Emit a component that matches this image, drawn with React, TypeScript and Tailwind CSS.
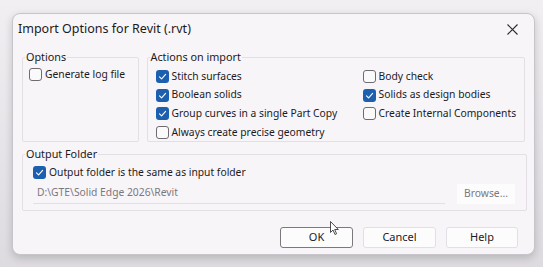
import React from 'react';

type CheckProps = { label: string; checked?: boolean };

const Check: React.FC<CheckProps> = ({ label, checked }) => (
  <label className="flex items-center gap-[3px] h-[18.7px] whitespace-nowrap">
    {checked ? (
      <span className="w-[13px] h-[13px] rounded-[3px] bg-[#1c5fae] flex items-center justify-center shrink-0">
        <svg width="9" height="9" viewBox="0 0 9 9" fill="none">
          <path d="M1.5 4.8 L3.6 6.8 L7.6 2.3" stroke="#ffffff" strokeWidth="1.1" strokeLinecap="round" strokeLinejoin="round" />
        </svg>
      </span>
    ) : (
      <span className="w-[13px] h-[13px] rounded-[3px] border border-[#6f6b70] bg-[#fbfafb] shrink-0" />
    )}
    <span>{label}</span>
  </label>
);

const Group: React.FC<{ title: string; className?: string; children: React.ReactNode }> = ({
  title,
  className,
  children,
}) => (
  <fieldset className={`border border-[#e3dfe5] rounded-[2px] ${className ?? ''}`}>
    <legend className="ml-[2px] px-[1px] leading-[14px] text-[10.8px]">{title}</legend>
    {children}
  </fieldset>
);

export default function App() {
  return (
    <div
      className="w-[543px] h-[267px] bg-gradient-to-b from-[#f1eff2] to-[#dddbdf] pt-[13px] pl-[12px] overflow-hidden relative text-[#1b1a1c]"
      style={{ fontFamily: '"Noto Sans", "Open Sans", sans-serif' }}
    >
      <div className="w-[523px] h-[242px] rounded-[8px] border border-[#c8c5ca] bg-[#f8f5f9] shadow-[0_3px_8px_rgba(0,0,0,0.18)] flex flex-col">
        {/* title bar */}
        <div className="h-[30px] flex items-center justify-between pl-[5px] pr-[16px] pt-[1px]">
          <span className="text-[12.5px]">Import Options for Revit (.rvt)</span>
          <svg width="11" height="11" viewBox="0 0 11 11">
            <path d="M0.5 0.5 L10.5 10.5 M10.5 0.5 L0.5 10.5" stroke="#2a292b" strokeWidth="1.1" />
          </svg>
        </div>

        <div className="text-[10.3px] flex flex-col px-[9px] pt-[6px]">
          <div className="flex gap-[8px]">
            <Group title="Options" className="w-[117px] h-[92px]">
              <div className="pt-[1px] pl-[6px]">
                <Check label="Generate log file" />
              </div>
            </Group>
            <Group title="Actions on import" className="w-[380px] h-[92px]">
              <div className="flex pt-[3px] pl-[8px]">
                <div className="w-[207px] flex flex-col">
                  <Check label="Stitch surfaces" checked />
                  <Check label="Boolean solids" checked />
                  <Check label="Group curves in a single Part Copy" checked />
                  <Check label="Always create precise geometry" />
                </div>
                <div className="flex flex-col">
                  <Check label="Body check" />
                  <Check label="Solids as design bodies" checked />
                  <Check label="Create Internal Components" />
                </div>
              </div>
            </Group>
          </div>

          <Group title="Output Folder" className="mt-[5px] w-[505px] h-[64px]">
            <div className="pl-[10px] pr-[10px]">
              <div className="pt-[2px]">
                <Check label="Output folder is the same as input folder" checked />
              </div>
              <div className="flex items-center gap-[12px] mt-[2px]">
                <div className="w-[412px] h-[20px] border-b border-[#e3dfe5] flex items-center pl-[4px] text-[#7b787d]">
                  D:\GTE\Solid Edge 2026\Revit
                </div>
                <div className="w-[58px] h-[20px] bg-[#fdfcfd] flex items-center justify-center text-[#7b787d]">
                  Browse...
                </div>
              </div>
            </div>
          </Group>

          <div className="flex justify-end gap-[10px] mt-[16px] pr-[7px] text-[11px]">
            <button className="w-[73px] h-[21px] border border-[#7b797d] rounded-[3px] bg-[#fdfcfd]">OK</button>
            <button className="w-[73px] h-[21px] border border-[#e3e0e5] rounded-[3px] bg-[#fdfcfd]">Cancel</button>
            <button className="w-[72px] h-[21px] border border-[#e3e0e5] rounded-[3px] bg-[#fdfcfd]">Help</button>
          </div>
        </div>
      </div>

      {/* mouse pointer */}
      <svg className="absolute left-[330px] top-[221px]" width="10" height="15" viewBox="0 0 10 15">
        <path d="M0.5 0.5 L0.5 11.5 L3 9 L5 13.5 L6.6 12.8 L4.7 8.5 L8.3 8.5 Z" fill="#ffffff" stroke="#3a393b" strokeWidth="0.9" strokeLinejoin="round" />
      </svg>
    </div>
  );
}
